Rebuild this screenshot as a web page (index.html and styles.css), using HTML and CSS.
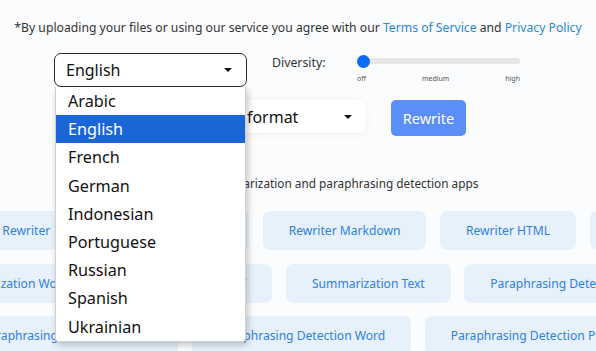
FILE: index.html
```html
<!DOCTYPE html>
<html lang="en">
<head>
<meta charset="utf-8">
<title>Rewriter</title>
<link rel="stylesheet" href="styles.css">
</head>
<body>
<p class="terms">*By uploading your files or using our service you agree with our <a href="#">Terms of Service</a> and <a href="#">Privacy Policy</a></p>

<div class="controls">
  <div class="lang">
    <div class="select">
      <span>English</span>
      <span class="caret"></span>
    </div>
    <ul class="menu">
      <li>Arabic</li>
      <li class="active">English</li>
      <li>French</li>
      <li>German</li>
      <li>Indonesian</li>
      <li>Portuguese</li>
      <li>Russian</li>
      <li>Spanish</li>
      <li>Ukrainian</li>
    </ul>
  </div>
  <span class="div-label">Diversity:</span>
  <div class="slider">
    <div class="track"><span class="thumb"></span></div>
    <div class="ticks"><span>off</span><span>medium</span><span>high</span></div>
  </div>
</div>

<div class="actions">
  <div class="format">
    <span>Text format</span>
    <span class="caret"></span>
  </div>
  <button class="rewrite">Rewrite</button>
</div>

<p class="apps-title">Try our rewriter, summarization and paraphrasing detection apps</p>

<div class="apps">
  <div class="row r1">
    <a class="chip" href="#">Text Rewriter</a>
    <a class="chip tight" href="#">Rewriter Document</a>
    <a class="chip" href="#">Rewriter Markdown</a>
    <a class="chip" href="#">Rewriter HTML</a>
    <a class="chip" href="#">Rewriter PDF</a>
  </div>
  <div class="row r2">
    <a class="chip" href="#">Summarization Word</a>
    <a class="chip" href="#">Summarization PDF</a>
    <a class="chip" href="#">Summarization Text</a>
    <a class="chip" href="#">Paraphrasing Detection Text</a>
  </div>
  <div class="row r3">
    <a class="chip" href="#">Paraphrasing Detection HTML</a>
    <a class="chip" href="#">Paraphrasing Detection Word</a>
    <a class="chip" href="#">Paraphrasing Detection PPTX</a>
  </div>
</div>
</body>
</html>
```

FILE: styles.css
```css
html, body {
  margin: 0;
  padding: 0;
}
body {
  background: #fbfcfe;
  font-family: "Noto Sans", "Open Sans", sans-serif;
  color: #333;
  overflow: hidden;
  width: 596px;
  height: 351px;
}
.terms {
  margin: 19px 0 0;
  font-size: 12.2px;
  line-height: 18px;
  text-align: center;
  white-space: nowrap;
  color: #333;
}
.terms a {
  color: #2b87dd;
  text-decoration: none;
}
.controls {
  display: flex;
  align-items: flex-start;
  margin-top: 16px;
  padding-left: 54px;
}
.lang {
  position: relative;
}
.select {
  box-sizing: border-box;
  width: 193px;
  height: 34px;
  border: 1.5px solid #2b2b2b;
  border-radius: 7px;
  background: #fff;
  display: flex;
  align-items: center;
  justify-content: space-between;
  padding: 0 14px 0 11px;
  font-size: 16px;
  color: #111;
}
.caret {
  width: 0;
  height: 0;
  border-left: 4px solid transparent;
  border-right: 4px solid transparent;
  border-top: 4.5px solid #111;
}
.menu {
  position: absolute;
  top: 100%;
  left: 1px;
  width: 191px;
  margin: 0;
  padding: 0;
  list-style: none;
  background: #fff;
  border: 1px solid #d0d0d0;
  border-top: none;
  box-sizing: border-box;
  border-radius: 0 0 4px 4px;
  box-shadow: 2px 3px 7px rgba(0, 0, 0, 0.22);
  z-index: 5;
}
.menu li {
  height: 28.2px;
  line-height: 28.2px;
  padding-left: 12px;
  font-size: 16.2px;
  color: #111;
}
.menu li.active {
  background: #1a66d6;
  color: #fff;
}
.div-label {
  width: 53px;
  margin: 1px 0 0 25px;
  font-size: 12.3px;
  line-height: 18px;
  white-space: nowrap;
  color: #333;
}
.slider {
  width: 163px;
  margin: 2px 0 0 32px;
}
.track {
  position: relative;
  height: 6px;
  margin-top: 3px;
  border-radius: 3px;
  background: #e6e6e6;
}
.thumb {
  position: absolute;
  left: 0;
  top: -3.5px;
  width: 13px;
  height: 13px;
  border-radius: 50%;
  background: #0b6cf7;
}
.ticks {
  display: flex;
  justify-content: space-between;
  margin-top: 10px;
  font-size: 7px;
  line-height: 10px;
  color: #555;
}
.actions {
  display: flex;
  align-items: flex-start;
  margin-top: 13px;
  padding-left: 200px;
}
.format {
  box-sizing: border-box;
  width: 166px;
  height: 33px;
  border-radius: 8px;
  background: #fff;
  box-shadow: 0 1px 6px rgba(0, 0, 0, 0.06);
  display: flex;
  align-items: center;
  justify-content: space-between;
  padding: 0 14px 0 12px;
  font-size: 16px;
  color: #111;
}
.rewrite {
  margin-left: 25px;
  width: 75px;
  height: 36px;
  border: none;
  border-radius: 5px;
  background: #5b8ff8;
  color: #fff;
  font-family: inherit;
  font-size: 14.5px;
  padding: 0;
}
.apps-title {
  margin: 38px 0 0;
  font-size: 11.8px;
  line-height: 18px;
  text-align: center;
  white-space: nowrap;
  color: #333;
}
.apps {
  margin-top: 19px;
  display: flex;
  flex-direction: column;
  gap: 13.5px;
}
.row {
  display: flex;
  gap: 13.5px;
  white-space: nowrap;
}
.r1 { margin-left: -50px; }
.r2 { margin-left: -77px; }
.r3 { margin-left: -44px; }
.chip {
  flex: none;
  display: flex;
  align-items: center;
  height: 39px;
  padding: 0 26px;
  border-radius: 7px;
  background: #e7f1fc;
  color: #2f80e6;
  font-size: 12.1px;
  text-decoration: none;
}
.chip.tight {
  padding: 0 24.5px;
}
```
